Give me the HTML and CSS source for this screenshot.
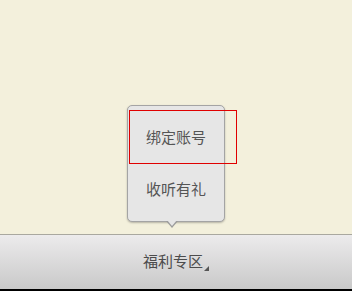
FILE: index.html
```html
<!DOCTYPE html>
<html lang="zh">
<head>
<meta charset="UTF-8"/>
<title>福利专区</title>
<link rel="stylesheet" href="styles.css">
</head>
<body>
<div class="screen">
  <!-- cream content area with the pop-up menu -->
  <div class="stage">
    <div class="popup">
      <div class="popup-item">绑定账号</div>
      <div class="popup-item">收听有礼</div>
      <span class="popup-arrow"></span>
    </div>
    <div class="focus-box"></div>
  </div>

  <!-- bottom tab bar -->
  <div class="tabbar">
    <span class="tab-label">福利专区</span>
    <span class="tab-corner"></span>
  </div>
  <div class="bottom-edge"></div>
</div>
</body>
</html>
```

FILE: styles.css
```css
html, body {
  margin:0; padding:0;
  width:352px; height:291px;
  overflow:hidden;
  font-family:"Noto Sans CJK SC", "Noto Sans", sans-serif;
}

.screen {
  display:flex;
  flex-direction:column;
  height:100%;
}

.stage {
  flex:1;
  position:relative;
  background:#f3f0dc;
}

/* pop-up menu */
.popup {
  position:absolute;
  left:127px; top:105px;
  width:96px;
  padding:4px 0 7px;
  background:#e6e6e6;
  border:1px solid #a4a4a4;
  border-radius:5px;
  box-shadow:0 1px 2px rgba(0,0,0,0.25);
}
.popup-item {
  height:52px;
  display:flex;
  align-items:center;
  justify-content:center;
  font-size:15px;
  color:#555;
}
.popup-arrow {
  position:absolute;
  left:38px; bottom:-7px;
  width:0; height:0;
  border-left:6px solid transparent;
  border-right:6px solid transparent;
  border-top:7px solid #9c9c9c;
}
.popup-arrow::after {
  content:"";
  position:absolute;
  left:-5px; top:-8px;
  border-left:5px solid transparent;
  border-right:5px solid transparent;
  border-top:6px solid #e6e6e6;
}

.focus-box {
  position:absolute;
  left:129px; top:110px;
  width:106px; height:52px;
  border:1px solid #e00000;
}

/* tab bar */
.tabbar {
  height:54px;
  flex-shrink:0;
  border-top:1px solid #a9a89f;
  background:linear-gradient(#ecebec, #c9c9c9);
  display:flex;
  align-items:center;
  justify-content:center;
  position:relative;
}
.tab-label {
  font-size:15px;
  color:#4c4c4c;
  margin:0 0 3px -6px;
}
.tab-corner {
  position:absolute;
  left:204px; top:31px;
  width:0; height:0;
  border-left:5px solid transparent;
  border-bottom:5px solid #555;
}

.bottom-edge {
  height:2px;
  flex-shrink:0;
  background:#000;
}
```
